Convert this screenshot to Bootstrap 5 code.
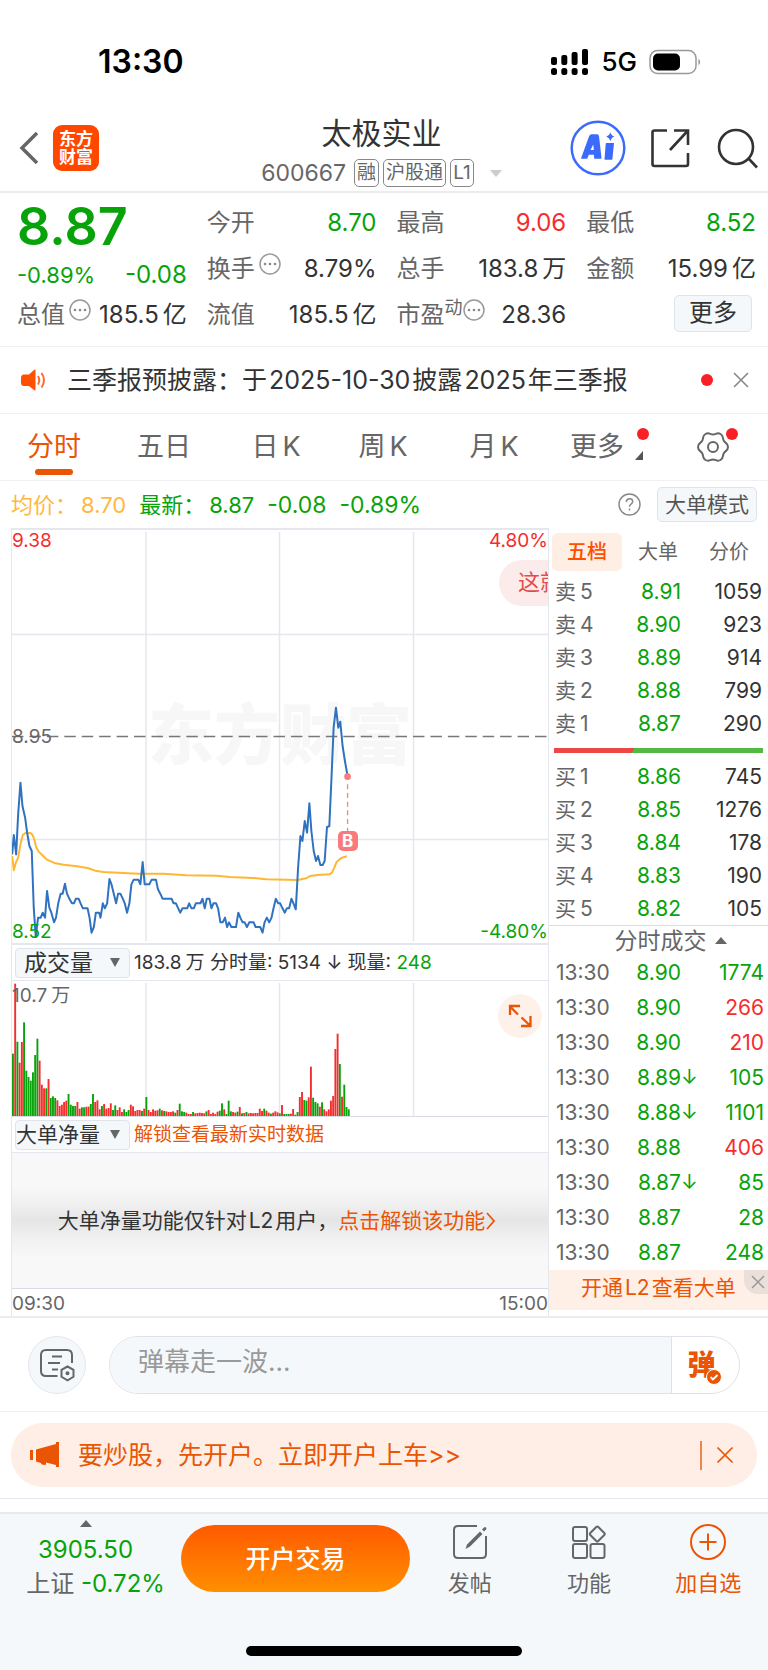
<!DOCTYPE html>
<html lang="zh-CN">
<head>
<meta charset="utf-8">
<meta name="viewport" content="width=device-width, initial-scale=1">
<title>太极实业 600667</title>
<link href="https://cdn.jsdelivr.net/npm/bootstrap@5.3.0/dist/css/bootstrap.min.css" rel="stylesheet">
<style>
:root{--up:#f52d2d;--down:#08a30b;--accent:#ea5504;--ink:#333;--muted:#666;--line:#e4e7ed;--soft:#f5f8fa}
body{font-family:Inter,"Noto Sans CJK SC",sans-serif;font-size:22px;line-height:32px;color:var(--ink);background:#fff}
button{background:none;border:0;padding:0;color:inherit}
svg{display:block}
a{color:inherit;text-decoration:none}
.up{color:var(--up)}.down{color:var(--down)}.muted{color:var(--muted)}.accent{color:var(--accent)}
.unit{margin-left:4px}.num{margin:0 2px}
.rule{border-bottom:1px solid #f0f0f2}

.statusbar{height:112px;padding:12px 66px 0 98px}
.clock{font-size:32px;font-weight:600;color:#000}
.net{font-size:26px;font-weight:500;color:#000}

.titlebar{height:81px;padding:0 10px 0 19px;border-bottom:2px solid #ececee}
.side{flex:1 1 0;gap:14px;margin-bottom:8px}
.tools{gap:24px}
.logo{width:46px;height:46px;border-radius:9px;background:#ff4700;color:#fff;font-size:17px;line-height:18px;font-weight:700}
.name-block{margin-right:14px}
.stock{font-size:30px;line-height:36px;margin:0 0 7px}
.code{font-size:23px;line-height:30px}
.tag{font-size:19px;line-height:26px;border:1px solid #888;border-radius:5px;padding:0 2px}
.tri{width:0;height:0;border:6px solid transparent}
.tri-down{border-top:7px solid #ccc;border-bottom:0}
.tri-up{border-bottom:7px solid #666;border-top:0}

.quote{display:grid;grid-template-columns:repeat(4,minmax(0,1fr));gap:14px 20px;padding:14px 12px 15px 17px}
.quote>div{display:flex;align-items:center;justify-content:space-between;height:32px}
.quote .k{font-size:24px;color:var(--muted)}
.quote .v{font-size:24px;white-space:nowrap}
.quote .price{display:block;grid-row:span 2;height:78px}
.last{font-size:52px;line-height:40px;margin-bottom:12px;font-weight:600}
.pct{font-size:22px}
.dots{align-self:flex-start}
.sup{font-size:18px;line-height:18px;align-self:flex-start}
.boxbtn{border:1px solid #dfe3ea;border-radius:5px;background:var(--soft)}
.more{width:78px;height:37px;font-size:24px;line-height:34px}

.notice{height:67px;padding:0 19px 0 20px;font-size:25px}
.notice a{margin-left:20px}
.dot{width:12px;height:12px;border-radius:50%;background:#f81f26}

.periods{display:grid;grid-template-columns:108fr 112fr 112fr 102fr 120fr 104fr 110fr;height:67px;font-size:27px;color:var(--muted)}
.periods button{position:relative;height:66px}
.periods .on{color:var(--accent)}
.periods .on::after{content:"";position:absolute;left:50%;bottom:5px;width:38px;height:6px;margin-left:-19px;border-radius:3px;background:var(--accent)}
.periods .dot{position:absolute;right:9px;top:14px}
.periods .drop{padding-right:18px}
.periods .gear .dot{right:30px}
.corner{position:absolute;right:15px;bottom:20px}

.info{height:47px;padding:0 11px;font-size:22px}
.info>span{margin-right:13px}
.info .pc{font-size:23px}
.info .avg{color:#ffb83d}
.mode{width:100px;height:35px;font-size:21px;line-height:32px;color:#555}

.market{display:grid;grid-template-columns:minmax(0,1fr) 219px;border-bottom:2px solid #ededf0}
.plots{margin-left:11px;border:1px solid var(--line);border-width:2px 1px 0 1px;min-width:0}
.plot{position:relative}
.plot svg{width:100%}
.trend{height:415px;border-bottom:2px solid var(--line)}
.lab{position:absolute;font-size:19px;line-height:22px}
.wm{position:absolute;left:0;right:0;top:160px;text-align:center;font-size:66px;line-height:90px;font-weight:900;color:#f7f7f8}
.pill{position:absolute;right:0;top:30px;width:49px;height:46px;border-radius:23px 0 0 23px;background:#fcebeb;color:#e24c4c;padding-left:19px;line-height:44px;overflow:hidden;white-space:nowrap}
.mark-b{position:absolute;left:62.6%;top:301px;width:20px;height:20px;margin-left:-10px;border-radius:5px;background:#f97a7d;color:#fff;font-size:17px;line-height:20px;font-weight:700;text-align:center}
.bar-row{height:36px;font-size:19px;line-height:30px;border-bottom:1px solid var(--line);padding-left:3px;white-space:nowrap}
.pick.form-select{width:115px;height:30px;padding:0 0 0 8px;border:1px solid #dfe3ea;border-radius:4px;font-size:23px;line-height:26px;color:var(--ink);background-color:var(--soft);background-position:right 9px center;background-size:10px 9px;--bs-form-select-bg-img:url("data:image/svg+xml,%3csvg xmlns='http://www.w3.org/2000/svg' viewBox='0 0 10 9'%3e%3cpath fill='%23666' d='M0 0h10L5 9z'/%3e%3c/svg%3e");margin-right:4px}
.pick.tight{padding-left:0;font-size:21px}
.volume{height:136px;border-bottom:1px solid #d9dce4}
.expand{position:absolute;right:6px;top:13px;width:44px;height:44px;border-radius:50%;background:#fdf1ea}
.locked{height:136px;padding-right:6px;border-bottom:1px solid #d9dce4;font-size:21px;background:linear-gradient(#f8f8f8 25%,#f0f0f1 38%,#e5e5e6 50%,#f0f0f1 62%,#f8f8f8 78%)}
.times{height:27px;font-size:19px;line-height:30px}

.book{font-size:21px;padding-top:1px}
.book-tabs{display:grid;grid-template-columns:72px 68px 74px;height:46px;padding-left:3px;font-size:20px;color:var(--muted)}
.book-tabs button{height:38px;margin:4px 0 0}
.book-tabs .on{background:#feeee4;color:#ff4f00;font-weight:500;border-radius:6px;margin-right:2px}
.levels{width:100%;table-layout:fixed}
.levels td,.levels th{padding:0;height:33px;line-height:33px;font-weight:400;white-space:nowrap}
.levels th{padding-left:6px;width:72px;color:var(--muted)}
.levels td:nth-child(2){width:60px;text-align:right}
.levels td:last-child{text-align:right;padding-right:6px}
.ticks td,.ticks th{height:35px;line-height:34px}
.ticks th{padding-left:7px}
.ticks td:nth-child(2){position:relative}
.ticks td:last-child{padding-right:4px}
.arrow{position:absolute;left:100%;top:0;font-size:20px}
.balance{height:5px;margin:8px 5px 7px;background:linear-gradient(110deg,#ec4747 38%,#55b843 38%)}
.book-head{height:30px;border-top:1px solid #d9dce4;font-size:23px;line-height:28px;color:var(--muted);padding-left:24px}
.unlock{position:relative;height:40px;background:#feefe7;line-height:36px;padding-left:32px}
.unlock button{position:absolute;right:0;top:0;width:24px;height:24px;border-radius:0 0 0 14px;background:#eadfd9;padding-left:3px}

.composer{height:94px;padding:0 28px}
.round{width:58px;height:58px;border:1px solid var(--line);border-radius:50%;background:var(--soft)}
.barrage{margin-left:23px;height:58px;border:1px solid #dfe2ea;border-radius:29px;overflow:hidden}
.barrage input{border:0;border-right:1px solid #dfe2ea;border-radius:0;background:var(--soft);font-size:26px;padding:0 28px 6px}
.barrage input::placeholder{color:#999}
.barrage button{width:67px;font-size:28px;line-height:30px;font-weight:900}
.ad-wrap{padding:11px;border-bottom:1px solid var(--line)}
.ad{height:64px;border-radius:32px;background:#feeee5;padding:0 23px 0 19px;font-size:25px}
.ad a{margin-left:18px}
.ad i{width:2px;height:29px;background:var(--accent);opacity:.7;margin-right:14px}

.dock{margin-top:13px;padding-bottom:14px;background:var(--soft);border-top:2px solid #e8eaee}
.dock-main{height:85px}
.index{width:181px;padding:6px 10px 0 0;font-size:24px;line-height:34px;text-align:center}
.index .tri{margin-bottom:6px}
.index .line2{padding-left:20px}
.trade{width:229px;height:67px;margin-top:11px;border-radius:34px;background:linear-gradient(#ff5a00,#ff8f00);color:#fff;font-size:25px;font-weight:500}
.acts{display:grid;grid-template-columns:repeat(3,1fr);font-size:22px}
.acts button{padding-top:10px}
.acts span{display:block;line-height:40px;padding-top:3px}
.home{width:276px;height:10px;border-radius:5px;background:#000;margin:47px auto 0}
</style>
</head>
<body>
<header>
  <div class="statusbar d-flex align-items-center justify-content-between">
    <span class="clock">13:30</span>
    <span class="d-flex align-items-center">
      <svg width="38" height="28" viewBox="0 0 38 28"><g><rect y="9" width="6" height="8" rx="2"/><rect x="10.300" y="7" width="6" height="10" rx="2"/><rect x="20.600" y="4" width="6" height="13" rx="2"/><rect x="31" y="1" width="6" height="16" rx="2"/><rect y="20" width="6" height="7" rx="2.500"/><rect x="10.300" y="20" width="6" height="7" rx="2.500"/><rect x="20.600" y="20" width="6" height="7" rx="2.500"/><rect x="31" y="20" width="6" height="7" rx="2.500"/></g></svg>
      <span class="net ms-2 me-2 px-1">5G</span>
      <svg width="53" height="26" viewBox="0 0 53 26"><rect x="1" y="1.500" width="46" height="23" rx="7.500" fill="none" stroke="#999" stroke-width="1.500"/><rect x="4" y="4.500" width="27" height="17" rx="5"/><path d="M49.500 9.500q3 3.500 0 7z" fill="#888"/></svg>
    </span>
  </div>
  <div class="titlebar d-flex align-items-center">
    <div class="side d-flex align-items-center">
      <button aria-label="返回"><svg width="20" height="34" viewBox="0 0 20 34"><path d="M18 2 3 17l15 15" fill="none" stroke="#666" stroke-width="3.500"/></svg></button>
      <div class="logo d-flex align-items-center justify-content-center text-center"><span>东方<br>财富</span></div>
    </div>
    <div class="name-block text-center">
      <h1 class="stock fw-normal">太极实业</h1>
      <div class="code d-flex align-items-center muted">600667<span class="tag ms-2">融</span><span class="tag ms-1">沪股通</span><span class="tag ms-1">L1</span><span class="tri tri-down ms-3"></span></div>
    </div>
    <div class="side tools d-flex align-items-center justify-content-end">
      <button aria-label="AI"><svg width="56" height="56" viewBox="0 0 56 56"><circle cx="28" cy="28" r="26.300" fill="none" stroke="#3b6bfb" stroke-width="2.500"/><path fill="#3b6bfb" fill-rule="evenodd" d="M11 38.500 19 16.500q.8-2.300 2.500-2.300h5.500q1.800 0 2 1.800l2.500 22q0 .7-.7.700h-6.500l-.5-4h-5l-1.600 4h-5.700q-.7 0-.5-.2zM20.500 30h3.300l-.5-5.500zM36.500 23h7.500l-1.600 16q0 .8-.8.800h-6.500q-.7 0-.6-.8l1.200-15q.1-1 .8-1zM40.500 12.500q1 3.500 4 4-3 .8-4 4.500-1.200-3.500-4.200-4.500 3-.7 4.200-4z"/></svg></button>
      <button aria-label="分享"><svg width="42" height="42" viewBox="0 0 42 42" fill="none" stroke="#333" stroke-width="2.600"><path d="M17 3.500H4.500Q2.500 3.500 2.500 5.500V37q0 2 2 2H36q2 0 2-2V26M24 3.500h14V18M37.500 4 20 23"/></svg></button>
      <button aria-label="搜索"><svg width="42" height="42" viewBox="0 0 42 42" fill="none" stroke="#333" stroke-width="2.600"><circle cx="20" cy="20" r="17"/><path d="m32.500 31.500 8.500 9"/></svg></button>
    </div>
  </div>
</header>

<main>
  <section class="quote rule">
    <div class="price down">
      <div class="last">8.87</div>
      <div class="d-flex justify-content-between align-items-center"><span class="pct">-0.89%</span><span class="v">-0.08</span></div>
    </div>
    <div><span class="k">今开</span><span class="v down">8.70</span></div>
    <div><span class="k">最高</span><span class="v up">9.06</span></div>
    <div><span class="k">最低</span><span class="v down">8.52</span></div>
    <div><span class="k">换手</span><svg class="dots me-auto ms-1" width="22" height="22" viewBox="0 0 22 22"><circle cx="11" cy="11" r="10" fill="none" stroke="#999" stroke-width="1.500"/><g fill="#888"><circle cx="6" cy="11" r="1.300"/><circle cx="11" cy="11" r="1.300"/><circle cx="16" cy="11" r="1.300"/></g></svg><span class="v">8.79%</span></div>
    <div><span class="k">总手</span><span class="v">183.8<span class="unit">万</span></span></div>
    <div><span class="k">金额</span><span class="v">15.99<span class="unit">亿</span></span></div>
    <div><span class="k">总值</span><svg class="dots me-auto ms-1" width="22" height="22" viewBox="0 0 22 22"><circle cx="11" cy="11" r="10" fill="none" stroke="#999" stroke-width="1.500"/><g fill="#888"><circle cx="6" cy="11" r="1.300"/><circle cx="11" cy="11" r="1.300"/><circle cx="16" cy="11" r="1.300"/></g></svg><span class="v">185.5<span class="unit">亿</span></span></div>
    <div><span class="k">流值</span><span class="v">185.5<span class="unit">亿</span></span></div>
    <div><span class="k">市盈</span><span class="sup muted">动</span><svg class="dots me-auto" width="22" height="22" viewBox="0 0 22 22"><circle cx="11" cy="11" r="10" fill="none" stroke="#999" stroke-width="1.500"/><g fill="#888"><circle cx="6" cy="11" r="1.300"/><circle cx="11" cy="11" r="1.300"/><circle cx="16" cy="11" r="1.300"/></g></svg><span class="v">28.36</span></div>
    <div class="pe-1"><button class="boxbtn more ms-auto mb-1">更多</button></div>
  </section>

  <section class="notice rule d-flex align-items-center">
    <svg width="27" height="22" viewBox="0 0 27 22"><path fill="#ff5000" d="M4 5.500h5L14 1q1.500-1 1.500.5v19q0 1.500-1.500.500L9 17H4Q1 17 1 14V9q0-3.500 3-3.500z"/><g fill="none" stroke="#ff6a2a" stroke-width="2"><path d="M18 7q2.500 4 0 8.500M21.500 4q5 7 0 14.500"/></g></svg>
    <a href="#">三季报预披露：于<span class="num">2025-10-30</span>披露<span class="num">2025</span>年三季报</a>
    <span class="dot ms-auto"></span>
    <button class="ms-3 ps-1" aria-label="关闭"><svg width="16" height="16" viewBox="0 0 16 16"><path d="m1 1 14 14M15 1 1 15" stroke="#888" stroke-width="1.600"/></svg></button>
  </section>

  <nav class="periods rule">
    <button class="on">分时</button><button>五日</button><button>日<span class="unit">K</span></button><button>周<span class="unit">K</span></button><button>月<span class="unit">K</span></button>
    <button class="drop">更多<span class="dot"></span><svg class="corner" width="8" height="9" viewBox="0 0 8 9"><path d="M8 0v9H0z" fill="#555"/></svg></button>
    <button class="gear d-flex align-items-center justify-content-center" aria-label="设置"><svg width="32" height="32" viewBox="0 0 32 32" fill="none" stroke="#666" stroke-width="2"><path d="M31 16C31 20 28.300 19.600 26.800 22.200S27 27 23.500 29S19 28.500 16 28.500S12 31 8.500 29S6.700 24.800 5.200 22.200S1 20 1 16S3.700 12.400 5.200 9.800S5 5 8.500 3S13 3.500 16 3.500S20 1 23.500 3S25.300 7.200 26.800 9.800S31 12 31 16z"/><circle cx="16" cy="16" r="5"/></svg><span class="dot"></span></button>
  </nav>

  <div class="info d-flex align-items-center">
    <span class="avg">均价：<span class="unit">8.70</span></span><span class="down">最新：<span class="unit">8.87</span></span><span class="down pc">-0.08</span><span class="down pc">-0.89%</span>
    <button class="ms-auto me-3" aria-label="帮助"><svg width="23" height="23" viewBox="0 0 23 23" fill="none" stroke="#888" stroke-width="1.500"><circle cx="11.500" cy="11.500" r="10.500"/><path d="M8.300 9q.2-3.300 3.300-3.300 3 0 3.100 2.700 0 1.500-1.700 2.700-1.500 1-1.500 2.700"/><path d="M11.500 15.500v2"/></svg></button>
    <button class="boxbtn mode">大单模式</button>
  </div>

  <section class="market">
    <div class="plots">
      <div class="plot trend">
        <div class="wm">东方财富</div>
        <svg class="position-relative" height="413" viewBox="0 0 538 413" preserveAspectRatio="none" fill="none">
          <path d="M134.500 2v409M268.500 2v409M403 2v409M0 104.500h538M0 309.500h538" stroke="#e4e7ed" stroke-width="1.500"/>
          <path d="M0 206.500h538" stroke="#777" stroke-width="1.500" stroke-dasharray="11.500 6"/>
          <g transform="translate(-11.500 151) scale(.33333)" stroke-width="6" stroke-linejoin="round">
            <path stroke="#ffb733" d="M35 525 40 568 46 545 53 530 60 490 67 462 75 456 90 456 97 463 103 480 107 498 115 512 125 522 140 536 165 547 190 551 230 556 262 561 285 569 310 573 370 576 415 578 490 578 560 583 650 584 690 588 760 591 800 595 895 597 920 592 932 585 955 582 990 580 998 575 1005 560 1012 543 1020 536 1028 530 1043 526"/>
            <path stroke="#2f72c0" d="M35 520 40 462 47 520 53 400 60 305 66 375 74 410 80 455 87 495 94 510 100 680 106 768 113 710 121 710 127 695 134 710 140 630 147 680 153 695 161 724 167 710 174 665 181 638 187 638 194 608 200 638 208 655 215 667 221 667 227 653 235 653 241 667 248 682 262 682 268 710 274 755 281 738 287 695 297 695 301 710 308 667 314 682 321 667 328 594 334 610 341 638 348 667 354 638 361 638 368 653 374 667 381 695 388 667 394 610 401 596 415 596 421 610 428 543 434 610 448 610 455 596 468 596 474 625 481 638 488 653 515 653 521 667 528 667 541 695 548 682 562 682 568 667 575 682 582 682 588 667 602 667 608 653 615 682 621 653 629 653 635 682 641 667 649 667 655 682 662 724 669 724 676 710 682 738 688 724 695 738 709 738 716 695 722 710 729 724 735 724 742 738 749 724 762 724 768 738 782 738 789 755 795 724 802 710 809 724 816 710 822 682 829 653 836 667 842 667 849 682 856 695 862 682 869 682 876 653 882 667 889 685 896 560 903 465 909 480 916 420 923 455 930 367 936 450 943 510 950 540 956 525 963 552 970 552 976 540 983 438 990 436 997 280 1003 140 1010 80 1017 140 1023 122 1030 195 1037 240 1045 285"/>
            <path stroke="#f78587" stroke-width="4" stroke-dasharray="15 11" d="M1045 310V450"/>
            <circle cx="1045" cy="287" r="10" fill="#f97a7d"/>
          </g>
        </svg>
        <span class="lab up start-0 top-0">9.38</span>
        <span class="lab up end-0 top-0">4.80%</span>
        <span class="lab muted start-0 top-50 translate-middle-y">8.95</span>
        <span class="lab down start-0 bottom-0">8.52</span>
        <span class="lab down end-0 bottom-0">-4.80%</span>
        <span class="pill">这就</span>
        <span class="mark-b">B</span>
      </div>
      <div class="bar-row d-flex align-items-center">
        <select class="form-select pick" aria-label="指标一"><option>成交量</option></select>
        <span>183.8<span class="unit">万</span> 分时量: 5134 ↓ 现量: <span class="down">248</span></span>
      </div>
      <div class="plot volume">
        <svg id="vol" height="135" viewBox="0 0 538 135" preserveAspectRatio="none"><path d="M134.500 2v133M268.500 2v133M403 2v133" stroke="#e4e7ed" stroke-width="1.500"/></svg>
        <span class="lab muted start-0 top-0 pt-1">10.7<span class="unit">万</span></span>
        <button class="expand d-flex align-items-center justify-content-center" aria-label="放大"><svg width="24" height="24" viewBox="0 0 24 24" fill="none" stroke="#ea5504" stroke-width="2.300"><path d="M10 10.500 2.500 3M2 11V2h10M13.500 13.500l8 7.500M22.500 12v10H13"/></svg></button>
      </div>
      <div class="bar-row d-flex align-items-center">
        <select class="form-select pick tight" aria-label="指标二"><option>大单净量</option></select>
        <a class="accent" href="#">解锁查看最新实时数据</a>
      </div>
      <div class="locked d-flex align-items-center justify-content-center">
        <span>大单净量功能仅针对<span class="num">L2</span>用户，</span><a class="accent d-flex align-items-center" href="#">点击解锁该功能<svg width="11" height="18" viewBox="0 0 11 18"><path d="m2 1 7 8-7 8" fill="none" stroke="#ea5504" stroke-width="1.800"/></svg></a>
      </div>
      <div class="times d-flex justify-content-between muted"><span>09:30</span><span>15:00</span></div>
    </div>

    <aside class="book">
      <div class="book-tabs"><button class="on">五档</button><button>大单</button><button>分价</button></div>
      <table class="levels"><tbody>
        <tr><th>卖<span class="unit">5</span></th><td class="down">8.91</td><td>1059</td></tr>
        <tr><th>卖<span class="unit">4</span></th><td class="down">8.90</td><td>923</td></tr>
        <tr><th>卖<span class="unit">3</span></th><td class="down">8.89</td><td>914</td></tr>
        <tr><th>卖<span class="unit">2</span></th><td class="down">8.88</td><td>799</td></tr>
        <tr><th>卖<span class="unit">1</span></th><td class="down">8.87</td><td>290</td></tr>
      </tbody></table>
      <div class="balance"></div>
      <table class="levels"><tbody>
        <tr><th>买<span class="unit">1</span></th><td class="down">8.86</td><td>745</td></tr>
        <tr><th>买<span class="unit">2</span></th><td class="down">8.85</td><td>1276</td></tr>
        <tr><th>买<span class="unit">3</span></th><td class="down">8.84</td><td>178</td></tr>
        <tr><th>买<span class="unit">4</span></th><td class="down">8.83</td><td>190</td></tr>
        <tr><th>买<span class="unit">5</span></th><td class="down">8.82</td><td>105</td></tr>
      </tbody></table>
      <div class="book-head d-flex align-items-center justify-content-center">分时成交<span class="tri tri-up ms-2"></span></div>
      <table class="levels ticks"><tbody>
        <tr><th>13:30</th><td class="down">8.90</td><td class="down">1774</td></tr>
        <tr><th>13:30</th><td class="down">8.90</td><td class="up">266</td></tr>
        <tr><th>13:30</th><td class="down">8.90</td><td class="up">210</td></tr>
        <tr><th>13:30</th><td class="down">8.89<span class="arrow">↓</span></td><td class="down">105</td></tr>
        <tr><th>13:30</th><td class="down">8.88<span class="arrow">↓</span></td><td class="down">1101</td></tr>
        <tr><th>13:30</th><td class="down">8.88</td><td class="up">406</td></tr>
        <tr><th>13:30</th><td class="down">8.87<span class="arrow">↓</span></td><td class="down">85</td></tr>
        <tr><th>13:30</th><td class="down">8.87</td><td class="down">28</td></tr>
        <tr><th>13:30</th><td class="down">8.87</td><td class="down">248</td></tr>
      </tbody></table>
      <div class="unlock accent"><a href="#">开通<span class="num">L2</span>查看大单</a><button class="d-flex align-items-center justify-content-center" aria-label="关闭"><svg width="14" height="14" viewBox="0 0 14 14"><path d="m1 1 12 12M13 1 1 13" stroke="#999" stroke-width="1.500"/></svg></button></div>
    </aside>
  </section>

  <section class="composer rule d-flex align-items-center">
    <button class="round d-flex align-items-center justify-content-center" aria-label="弹幕设置"><svg width="36" height="34" viewBox="0 0 36 34" fill="none" stroke="#666" stroke-width="2"><path d="M18.500 28H7q-5 0-5-5V7q0-5 5-5h21q5 0 5 5v8M13 8.500h10M9 15h12M13 21.500h6"/><path d="m28.500 18.500 6 3.300v7l-6 3.500-6-3.500v-7z"/><circle cx="28.500" cy="25.300" r="1" fill="#666"/></svg></button>
    <div class="barrage d-flex flex-grow-1">
      <input class="form-control shadow-none flex-grow-1" type="text" placeholder="弹幕走一波..." aria-label="弹幕">
      <button class="accent position-relative flex-shrink-0 pe-2" aria-label="弹幕开关">弹<svg class="position-absolute start-50 top-50 mt-1" width="16" height="16" viewBox="0 0 16 16"><circle cx="8" cy="8" r="7.500" fill="#ea5504" stroke="#fff"/><path d="m4.500 8 2.500 2.500L11.500 6" fill="none" stroke="#fff" stroke-width="1.800"/></svg></button>
    </div>
  </section>

  <div class="ad-wrap">
    <div class="ad accent d-flex align-items-center">
      <svg width="30" height="26" viewBox="0 0 30 26" fill="#ea5504"><path d="M0 8h3v10H0zM6 7.500 26 2V0h3v25h-3v-2l-10-2.500v1.500q0 1-1 1l-3-.500q-1-.300-1-1.500l-5-1.500z"/></svg>
      <a href="#">要炒股，先开户。立即开户上车&gt;&gt;</a>
      <i class="ms-auto"></i>
      <button aria-label="关闭广告"><svg width="18" height="18" viewBox="0 0 18 18"><path d="m1.500 1.500 15 15M16.500 1.500l-15 15" stroke="#ea5504" stroke-width="1.700"/></svg></button>
    </div>
  </div>
</main>

<footer class="dock">
  <div class="dock-main d-flex">
    <a class="index" href="#"><span class="tri tri-up d-block mx-auto"></span><span class="down d-block">3905.50</span><span class="line2 d-block text-nowrap"><span class="muted">上证</span> <span class="down">-0.72%</span></span></a>
    <button class="trade">开户交易</button>
    <nav class="acts flex-grow-1 muted">
      <button><svg class="mx-auto" width="36" height="36" viewBox="0 0 36 36" fill="none" stroke="#666" stroke-width="2"><path d="M25 2H6Q2 2 2 6v24q0 4 4 4h24q4 0 4-4V12"/><path d="m13.500 25 1.500-4.500L28 7.500l2.500 2.500L18 22.500zM30 5.500l2-2q1-1 2 0t0 2l-2 2z" fill="#666" stroke="none"/></svg><span>发帖</span></button>
      <button><svg class="mx-auto" width="36" height="36" viewBox="0 0 36 36" fill="none" stroke="#666" stroke-width="2"><rect x="2" y="3" width="14" height="14" rx="2"/><rect x="2" y="20" width="14" height="14" rx="2"/><rect x="19.500" y="20" width="14" height="14" rx="2"/><path d="M25.300 3q1-1 2 0l6 6q1 1 0 2l-6 6q-1 1-2 0l-6-6q-1-1 0-2z"/></svg><span>功能</span></button>
      <button class="accent"><svg class="mx-auto" width="36" height="36" viewBox="0 0 36 36" fill="none" stroke="#ea5504" stroke-width="2"><circle cx="18" cy="18" r="17"/><path d="M18 9.500v17M9.500 18h17"/></svg><span>加自选</span></button>
    </nav>
  </div>
  <div class="home"></div>
</footer>

<script src="https://cdn.jsdelivr.net/npm/bootstrap@5.3.0/dist/js/bootstrap.bundle.min.js"></script>
<script>
// Per-minute volume: g = falling, r = rising
const volume = 'g187 r397 g223 r160 r222 g281 g136 g117 g106 g131 g183 g232 r166 r94 r83 g83 r111 g54 g59 g54 r47 r30 r34 r42 r46 g66 g34 g30 g30 r42 r22 g26 g26 r28 r28 g36 g66 r42 r47 r20 g30 r36 r22 r24 r38 g18 g32 r18 r26 r12 g20 g12 g18 r34 r29 r15 r18 r18 g15 r22 g57 r18 r12 r20 r16 r17 g22 r17 g15 r14 r12 r12 r14 g10 r18 g37 g14 g12 r10 r6 r6 g12 r8 r9 r10 r9 r8 g14 r18 r6 r10 r6 r13 g16 g38 r20 g6 g46 g14 r12 r10 g13 r27 g8 r9 g12 r8 r9 r8 r9 r9 r22 r15 g22 r16 r10 g7 r10 r14 r11 g8 r33 g6 g6 g6 r7 r21 g4 g12 r57 r72 g48 g46 r56 r148 g55 g42 g38 r28 g41 r20 r14 r20 r46 r60 r201 r247 g156 r58 g94 g27 g20'.split(' ');
const svg = document.getElementById('vol');
volume.forEach((v, i) => {
  const bar = document.createElementNS('http://www.w3.org/2000/svg', 'rect');
  const h = v.slice(1) / 3;
  bar.setAttribute('x', i * 2.232);
  bar.setAttribute('y', 135 - h);
  bar.setAttribute('width', 1.9);
  bar.setAttribute('height', h);
  bar.setAttribute('fill', v[0] === 'r' ? '#f52d2d' : '#08a30b');
  svg.appendChild(bar);
});
</script>
</body>
</html>
